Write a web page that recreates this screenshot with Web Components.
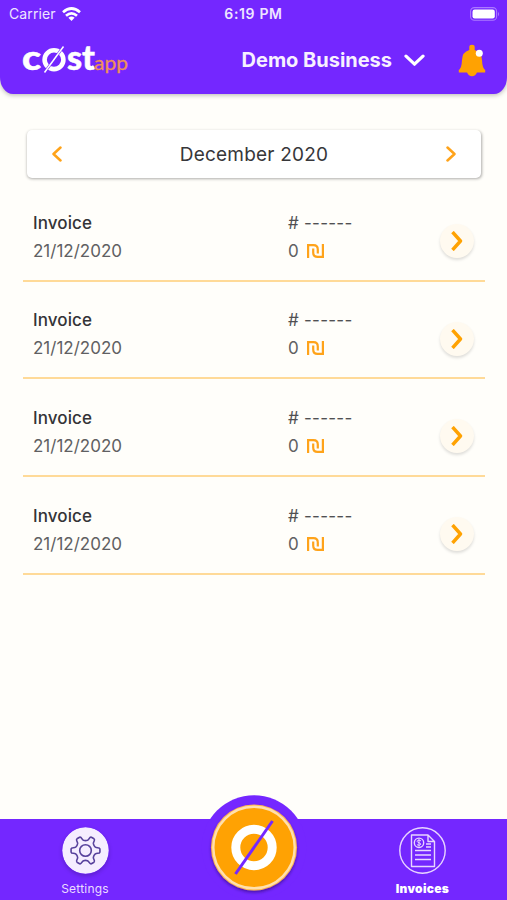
<!DOCTYPE html>
<html lang="en">
<head>
<meta charset="utf-8">
<title>Invoices</title>
<style>
    body {
        margin: 0;
        background: #fffefa;
        font-family: Inter, "Liberation Sans", sans-serif;
    }
</style>
</head>
<body>
<cost-screen>
    <app-header slot="header">Demo Business</app-header>
    <month-picker>December 2020</month-picker>
    <invoice-row date="21/12/2020" amount="0">Invoice</invoice-row>
    <invoice-row date="21/12/2020" amount="0">Invoice</invoice-row>
    <invoice-row date="21/12/2020" amount="0">Invoice</invoice-row>
    <invoice-row date="21/12/2020" amount="0">Invoice</invoice-row>
    <tab-bar slot="footer"></tab-bar>
</cost-screen>

<script>
class CostScreen extends HTMLElement {
    constructor() {
        super();
        this.attachShadow({ mode: 'open' });
        this.shadowRoot.innerHTML = `
            <style>
                :host {
                    display: flex;
                    flex-direction: column;
                    width: 507px;
                    height: 900px;
                    overflow: hidden;
                    background: #fffefa;
                }
                main {
                    flex: 1;
                    padding: 37px 22px 0 23px;
                }
            </style>
            <slot name="header"></slot>
            <main><slot></slot></main>
            <slot name="footer"></slot>
        `;
    }
}

class StatusBar extends HTMLElement {
    constructor() {
        super();
        this.attachShadow({ mode: 'open' });
        this.shadowRoot.innerHTML = `
            <style>
                :host {
                    display: grid;
                    grid-template-columns: 1fr auto 1fr;
                    align-items: center;
                    height: 28px;
                    padding: 0 9px;
                    font-size: 14px;
                    line-height: 28px;
                    color: #eee5ff;
                }
                .carrier {
                    display: flex;
                    align-items: center;
                    gap: 6px;
                    letter-spacing: 0.12px;
                }
                .time {
                    font-weight: 600;
                    letter-spacing: 0.65px;
                }
                .battery {
                    justify-self: end;
                    margin-right: -2px;
                }
                svg {
                    display: block;
                }
            </style>
            <div class="carrier"><span>Carrier</span>
                <svg width="19" height="14" viewBox="0 0 19 14" fill="none" stroke="#fff" stroke-width="2.7">
                    <path d="M1 5.2Q9.5-2.2 18 5.2M4 8.8Q9.5 4 15 8.8"/>
                    <path d="M6.4 10.8Q9.5 8.4 12.6 10.8L9.5 13.9Z" fill="#fff" stroke="none"/>
                </svg>
            </div>
            <div class="time">6:19 PM</div>
            <svg class="battery" width="30" height="14" viewBox="0 0 30 14">
                <rect x=".6" y=".6" width="26" height="12.6" rx="3.8" fill="none" stroke="#ab7aff" stroke-width="1.1"/>
                <rect x="2.5" y="2.5" width="22.3" height="8.9" rx="2.2" fill="#fff"/>
                <path d="M28 4.7Q30 7 28 9.3Z" fill="#ab7aff"/>
            </svg>
        `;
    }
}

class CostLogo extends HTMLElement {
    constructor() {
        super();
        this.attachShadow({ mode: 'open' });
        this.shadowRoot.innerHTML = `
            <style>
                :host {
                    display: block;
                    width: 110px;
                    height: 52px;
                }
                svg {
                    display: block;
                }
                text {
                    font-family: Lato, sans-serif;
                }
            </style>
            <svg width="110" height="52" viewBox="0 -10 110 52">
                <g fill="#fff" font-size="34" stroke="#fff" stroke-width=".5">
                    <text x="0" y="26" font-weight="900" textLength="19" lengthAdjust="spacingAndGlyphs">c</text>
                    <text x="45" y="26" font-weight="900" textLength="28" lengthAdjust="spacingAndGlyphs">st</text>
                </g>
                <circle cx="32" cy="15.7" r="9.4" fill="none" stroke="#fff" stroke-width="4.6"/>
                <path d="M22.5 28.5L41.5 2.5" stroke="#7427ff" stroke-width="2.7"/>
                <path d="M22.5 28.5L41.5 2.5" stroke="#fff" stroke-width="1.5"/>
                <text x="72" y="25.5" font-size="20" fill="#ee9157" stroke="#ee9157" stroke-width=".3" textLength="34" lengthAdjust="spacingAndGlyphs">app</text>
            </svg>
        `;
    }
}

class AppHeader extends HTMLElement {
    constructor() {
        super();
        this.attachShadow({ mode: 'open' });
        this.shadowRoot.innerHTML = `
            <style>
                :host {
                    display: block;
                    box-sizing: border-box;
                    height: 93.5px;
                    margin-bottom: -0.5px;
                    background: #7427ff;
                    border-radius: 0 0 13px 13px / 0 0 17px 17px;
                    box-shadow: 0 1px 5px rgba(0, 0, 0, 0.3);
                    flex: none;
                }
                .bar {
                    display: flex;
                    align-items: center;
                    height: 64px;
                    padding: 0 21.5px 0 22px;
                }
                .name {
                    margin-left: auto;
                    font-size: 20px;
                    font-weight: 700;
                    color: #f7f0ff;
                    letter-spacing: -0.02px;
                }
                .down {
                    margin: 0 32.5px 0 12px;
                }
            </style>
            <status-bar></status-bar>
            <div class="bar">
                <cost-logo></cost-logo>
                <span class="name"><slot></slot></span>
                <svg class="down" width="21" height="13" viewBox="0 0 21 13" fill="none" stroke="#fff" stroke-width="3.2" stroke-linecap="round" stroke-linejoin="round">
                    <path d="M2 2.2L10.5 10.2L19 2.2"/>
                </svg>
                <svg width="28" height="33" viewBox="0 0 28 33">
                    <path d="M11.3 6V3Q11.3.8 14 .8T16.7 3V6Q23.8 8 24 16Q24.3 24 27.2 26V28.5H.8V26Q3.7 24 4 16Q4.2 8 11.3 6ZM9 28.5H19Q17.5 32.2 14 32.2T9 28.5Z" fill="#ffa202"/>
                    <circle cx="21.3" cy="9.3" r="3.5" fill="#fff"/>
                </svg>
            </div>
        `;
    }
}

class MonthPicker extends HTMLElement {
    constructor() {
        super();
        this.attachShadow({ mode: 'open' });
        this.shadowRoot.innerHTML = `
            <style>
                :host {
                    display: flex;
                    align-items: center;
                    justify-content: space-between;
                    box-sizing: border-box;
                    height: 48px;
                    margin: 0 4px 6px;
                    padding: 0 24px;
                    background: #fff;
                    border-radius: 5px;
                    box-shadow: 0.5px 1px 3px rgba(0, 0, 0, 0.32);
                    font-size: 19px;
                    color: #37373a;
                    letter-spacing: 0.22px;
                }
                svg {
                    fill: none;
                    stroke: #ffa31a;
                    stroke-width: 2.5;
                    stroke-linecap: round;
                    stroke-linejoin: round;
                }
            </style>
            <svg width="12" height="16" viewBox="0 0 12 16"><path d="M9.5 1.5L2.5 8L9.5 14.5"/></svg>
            <span><slot></slot></span>
            <svg width="12" height="16" viewBox="0 0 12 16"><path d="M2.5 1.5L9.5 8L2.5 14.5"/></svg>
        `;
    }
}

class InvoiceRow extends HTMLElement {
    connectedCallback() {
        this.attachShadow({ mode: 'open' });
        this.shadowRoot.innerHTML = `
            <style>
                :host {
                    display: grid;
                    grid-template-columns: 255px 1fr 34px;
                    box-sizing: border-box;
                    height: 97.7px;
                    padding: 24.6px 11px 0 10px;
                    border-bottom: 2px solid #ffda98;
                    font-size: 17px;
                    line-height: 28px;
                    color: #606062;
                }
                .title {
                    color: #343437;
                    font-weight: 500;
                    letter-spacing: 0.1px;
                }
                .number {
                    letter-spacing: 0.25px;
                    color: #505052;
                }
                .amount {
                    display: flex;
                    align-items: center;
                    gap: 8px;
                }
                .go {
                    display: grid;
                    place-items: center;
                    width: 34px;
                    height: 34px;
                    margin-top: 15.5px;
                    border-radius: 50%;
                    background: #fffaf0;
                    box-shadow: 0 2px 3px rgba(0, 0, 0, 0.13);
                }
            </style>
            <div>
                <div class="title"><slot></slot></div>
                <div>${this.getAttribute('date')}</div>
            </div>
            <div>
                <div class="number"># ------</div>
                <div class="amount"><span>${this.getAttribute('amount')}</span>
                    <svg width="17" height="14" viewBox="0 0 17 14" fill="none" stroke="#ffa31a" stroke-width="2.2">
                        <path d="M1.1 14V1.1H6.5Q10.8 1.1 10.8 5.5V9.5M6.2 4.5V8.5Q6.2 12.9 10.5 12.9H15.9V0"/>
                    </svg>
                </div>
            </div>
            <div class="go">
                <svg width="12" height="20" viewBox="0 0 12 20" fill="none" stroke="#ffa202" stroke-width="3.4" stroke-linejoin="round">
                    <path d="M1.5 1L9.5 10L1.5 19"/>
                </svg>
            </div>
        `;
    }
}

class TabBar extends HTMLElement {
    constructor() {
        super();
        this.attachShadow({ mode: 'open' });
        this.shadowRoot.innerHTML = `
            <style>
                :host {
                    display: grid;
                    grid-template-columns: 170px 168px 169px;
                    height: 81px;
                    flex: none;
                    background: #7427ff;
                    color: #eadcff;
                    font-size: 12px;
                }
                .tab {
                    display: flex;
                    flex-direction: column;
                    align-items: center;
                    padding-top: 8px;
                    gap: 7px;
                    line-height: 16px;
                    letter-spacing: 0.2px;
                }
                .active {
                    font-weight: 900;
                    color: #fff;
                    letter-spacing: 0.3px;
                }
                .tab svg {
                    display: block;
                }
                /* the hump rises above the bar */
                .main {
                    position: relative;
                }
                .main svg {
                    position: absolute;
                    left: 30px;
                    top: -26px;
                }
                .settings {
                    border-radius: 50%;
                    box-shadow: 0 2px 4px rgba(0, 0, 0, 0.2);
                }
            </style>
            <div class="tab">
                <svg class="settings" width="47" height="47" viewBox="0 0 47 47" fill="none" stroke="#57419c" stroke-width="1.6" stroke-linejoin="round">
                    <circle cx="23.5" cy="23.5" r="23.2" fill="#f5edff" stroke="none"/>
                    <circle cx="23.5" cy="23.5" r="5.8"/>
                    <path id="gear"/>
                </svg>
                <span>Settings</span>
            </div>
            <div class="main">
                <svg width="108" height="107" viewBox="0 0 108 107">
                    <defs><filter id="drop" x="-20%" y="-20%" width="140%" height="140%"><feDropShadow dx="0" dy="2" stdDeviation="1.6" flood-color="#20005a" flood-opacity=".5"/></filter></defs>
                    <circle cx="54" cy="54.5" r="52.3" fill="#7427ff"/>
                    <circle cx="54" cy="54.5" r="43" fill="#ffb64e" filter="url(#drop)"/>
                    <circle cx="54" cy="54.5" r="40.7" fill="#ffa203" stroke="#ffe0ad" stroke-width="2.4"/>
                    <circle cx="54" cy="54.5" r="18.2" fill="none" stroke="#fff" stroke-width="9"/>
                    <path d="M35.5 81L72.5 28" stroke="#7427ff" stroke-width="3"/>
                </svg>
            </div>
            <div class="tab active">
                <svg width="47" height="47" viewBox="0 0 47 47" fill="none" stroke="#e8d5ff" stroke-width="1.4" stroke-linejoin="round">
                    <circle cx="23.5" cy="23.5" r="22.7"/>
                    <path d="M12.5 8H29L35.5 14.5V39.5H12.5ZM29 8V14.5H35.5M27 17H32M27 20H32M16 23.5H32M16 28H32M16 32.5H32"/>
                    <circle cx="20" cy="15.8" r="4.7"/>
                    <path d="M22 13.8Q18 12.5 18.2 14.5C18.4 16 21.8 15.6 21.8 17.2Q21.7 19 18 17.8M20 12V19.5" stroke-width="1"/>
                </svg>
                <span>Invoices</span>
            </div>
        `;
        this.shadowRoot.getElementById('gear').setAttribute('d', this.gearPath(6));
    }

    // closed outline with one tooth per step
    gearPath(teeth) {
        const point = (deg, r) => {
            const a = deg * Math.PI / 180;
            return (23.5 + r * Math.cos(a)).toFixed(2) + ' ' + (23.5 + r * Math.sin(a)).toFixed(2);
        };
        let d = '';
        for (let i = 0; i < teeth; i++) {
            const a = i * 360 / teeth;
            d += (i ? 'L' : 'M') + point(a - 19, 10.4);
            d += 'Q' + point(a - 15, 11) + ' ' + point(a - 13, 12.5);
            d += 'Q' + point(a - 11, 14.5) + ' ' + point(a - 6, 14.5);
            d += 'L' + point(a + 6, 14.5);
            d += 'Q' + point(a + 11, 14.5) + ' ' + point(a + 13, 12.5);
            d += 'Q' + point(a + 15, 11) + ' ' + point(a + 19, 10.4);
            d += 'Q' + point(a + 30, 9.5) + ' ' + point(a + 41, 10.4);
        }
        return d + 'Z';
    }
}

customElements.define('status-bar', StatusBar);
customElements.define('cost-logo', CostLogo);
customElements.define('app-header', AppHeader);
customElements.define('month-picker', MonthPicker);
customElements.define('invoice-row', InvoiceRow);
customElements.define('tab-bar', TabBar);
customElements.define('cost-screen', CostScreen);
</script>
</body>
</html>
